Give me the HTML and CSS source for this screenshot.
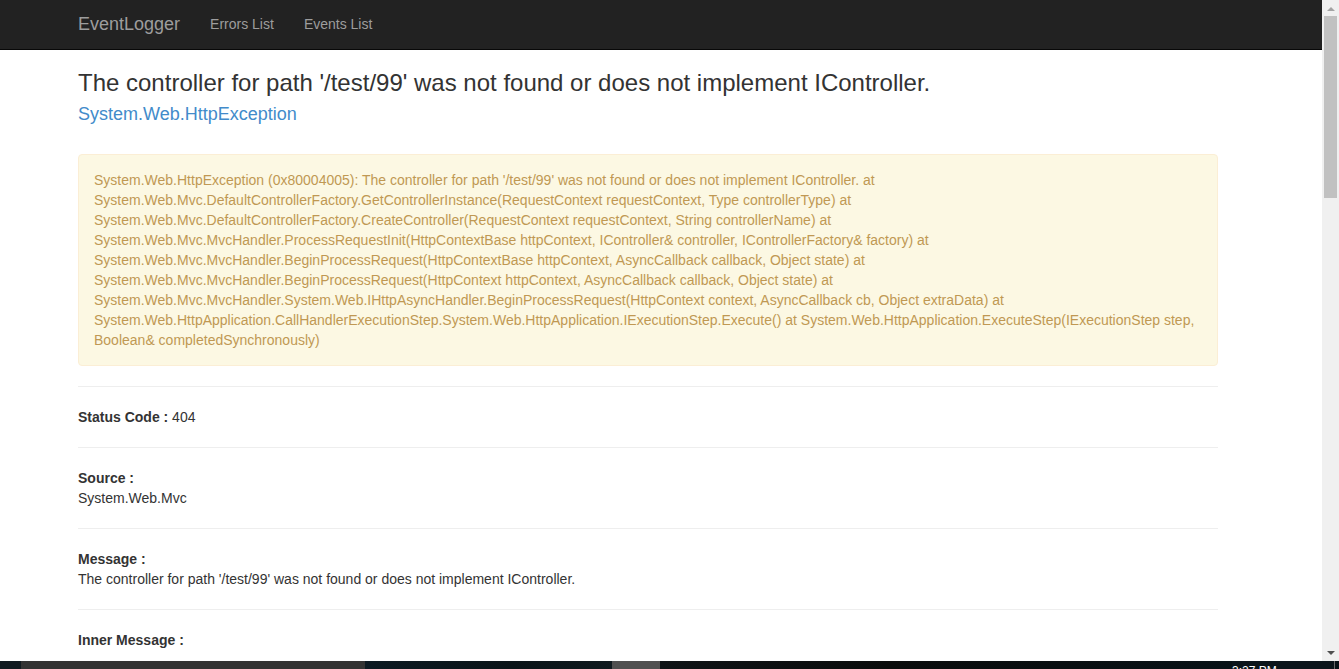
FILE: index.html
```html
<!DOCTYPE html>
<html lang="en">
<head>
<meta charset="utf-8">
<title>EventLogger - Error</title>
<link rel="stylesheet" href="styles.css">
</head>
<body>
<div class="viewport">
  <div class="page">
    <nav class="navbar">
      <div class="nav-inner">
        <a class="brand" href="#">EventLogger</a>
        <a class="nav-link" href="#">Errors List</a>
        <a class="nav-link" href="#">Events List</a>
      </div>
    </nav>
    <main class="container">
      <h3 class="title">The controller for path '/test/99' was not found or does not implement IController.</h3>
      <h4 class="subtitle">System.Web.HttpException</h4>
      <div class="alert">System.Web.HttpException (0x80004005): The controller for path '/test/99' was not found or does not implement IController. at<br>System.Web.Mvc.DefaultControllerFactory.GetControllerInstance(RequestContext requestContext, Type controllerType) at<br>System.Web.Mvc.DefaultControllerFactory.CreateController(RequestContext requestContext, String controllerName) at<br>System.Web.Mvc.MvcHandler.ProcessRequestInit(HttpContextBase httpContext, IController&amp; controller, IControllerFactory&amp; factory) at<br>System.Web.Mvc.MvcHandler.BeginProcessRequest(HttpContextBase httpContext, AsyncCallback callback, Object state) at<br>System.Web.Mvc.MvcHandler.BeginProcessRequest(HttpContext httpContext, AsyncCallback callback, Object state) at<br>System.Web.Mvc.MvcHandler.System.Web.IHttpAsyncHandler.BeginProcessRequest(HttpContext context, AsyncCallback cb, Object extraData) at<br>System.Web.HttpApplication.CallHandlerExecutionStep.System.Web.HttpApplication.IExecutionStep.Execute() at System.Web.HttpApplication.ExecuteStep(IExecutionStep step,<br>Boolean&amp; completedSynchronously)</div>
      <hr>
      <p class="field"><b>Status Code :</b> 404</p>
      <hr>
      <div class="field"><b>Source :</b><div>System.Web.Mvc</div></div>
      <hr>
      <div class="field"><b>Message :</b><div>The controller for path '/test/99' was not found or does not implement IController.</div></div>
      <hr>
      <div class="field"><b>Inner Message :</b><div>&nbsp;</div></div>
    </main>
  </div>
  <div class="scrollbar">
    <div class="sb-btn"><span class="arrow-up"></span></div>
    <div class="sb-track"><div class="sb-thumb"></div></div>
    <div class="sb-btn"><span class="arrow-down"></span></div>
  </div>
</div>
<div class="taskbar">
  <span class="tb-seg tb-edge"></span>
  <span class="tb-seg tb-app"></span>
  <span class="tb-seg tb-gap"></span>
  <span class="tb-seg tb-app2"></span>
  <span class="tb-seg tb-rest"></span>
  <span class="tb-clock">3:27 PM</span>
  <span class="tb-seg tb-end"></span>
</div>
</body>
</html>
```
FILE: styles.css
```css
* { box-sizing: border-box; }

html, body {
  margin: 0;
  padding: 0;
}

body {
  width: 1339px;
  height: 669px;
  overflow: hidden;
  display: grid;
  grid-template-rows: 661px 8px;
  font-family: "Liberation Sans", Arial, Helvetica, sans-serif;
  font-size: 14px;
  line-height: 20px;
  color: #333333;
  background: #ffffff;
}

.viewport {
  display: flex;
  overflow: hidden;
}

.page {
  flex: 1;
  overflow: hidden;
  background: #ffffff;
}

/* Navbar */
.navbar {
  height: 50px;
  background: #222222;
  border-bottom: 1px solid #080808;
}

.nav-inner {
  display: flex;
  align-items: center;
  height: 49px;
  padding-left: 63px;
}

.brand {
  font-size: 18px;
  line-height: 20px;
  padding: 14px 15px 15px;
  color: #9d9d9d;
  text-decoration: none;
}

.nav-link {
  font-size: 14px;
  line-height: 20px;
  padding: 14px 15px 15px;
  color: #9d9d9d;
  text-decoration: none;
}

/* Content */
.container {
  width: 1170px;
  margin-left: 63px;
  padding: 0 15px;
}

.title {
  font-size: 24px;
  font-weight: 500;
  line-height: 1.1;
  margin: 20px 0 9px;
  color: #333333;
}

.subtitle {
  font-size: 18px;
  font-weight: 500;
  line-height: 1.1;
  margin: 0 0 10px;
  color: #428bca;
}

.alert {
  margin-top: 29px;
  margin-bottom: 20px;
  padding: 15px;
  background: #fcf8e3;
  border: 1px solid #fbeed5;
  border-radius: 4px;
  color: #c09853;
}

hr {
  margin: 20px 0;
  border: 0;
  border-top: 1px solid #eeeeee;
  height: 0;
}

.field {
  margin: 0;
}

.field b {
  font-weight: bold;
}

/* Scrollbar */
.scrollbar {
  width: 17px;
  background: #f0f0f0;
  display: flex;
  flex-direction: column;
}

.sb-btn {
  height: 17px;
  display: flex;
  align-items: center;
  justify-content: center;
}

.arrow-up {
  width: 0;
  height: 0;
  border-left: 4px solid transparent;
  border-right: 4px solid transparent;
  border-bottom: 4px solid #a3a3a3;
}

.arrow-down {
  width: 0;
  height: 0;
  border-left: 4px solid transparent;
  border-right: 4px solid transparent;
  border-top: 4px solid #505050;
}

.sb-track {
  flex: 1;
  padding: 0 2px;
}

.sb-thumb {
  height: 182px;
  margin-top: -1px;
  background: #c1c1c1;
}

/* Taskbar */
.taskbar {
  display: flex;
  height: 8px;
  overflow: hidden;
  background: #0b151b;
}

.tb-seg {
  display: block;
  height: 8px;
}

.tb-edge { width: 21px; background: #101a20; }
.tb-app { width: 344px; background: #333333; }
.tb-gap { width: 247px; background: linear-gradient(90deg, #0c1a22, #0a1418 60%, #0f1a1f); }
.tb-app2 { width: 48px; background: #505050; }
.tb-rest { width: 572px; background: linear-gradient(90deg, #0f1417, #0a0c0c 40%, #081217); }

.tb-clock {
  width: 102px;
  color: #ffffff;
  font-family: "Liberation Sans", Arial, sans-serif;
  font-size: 12px;
  line-height: 12px;
  padding-top: 4px;
  white-space: nowrap;
}

.tb-end {
  flex: 1;
  border-left: 1px solid #6a6a6a;
  background: #081217;
}
```
